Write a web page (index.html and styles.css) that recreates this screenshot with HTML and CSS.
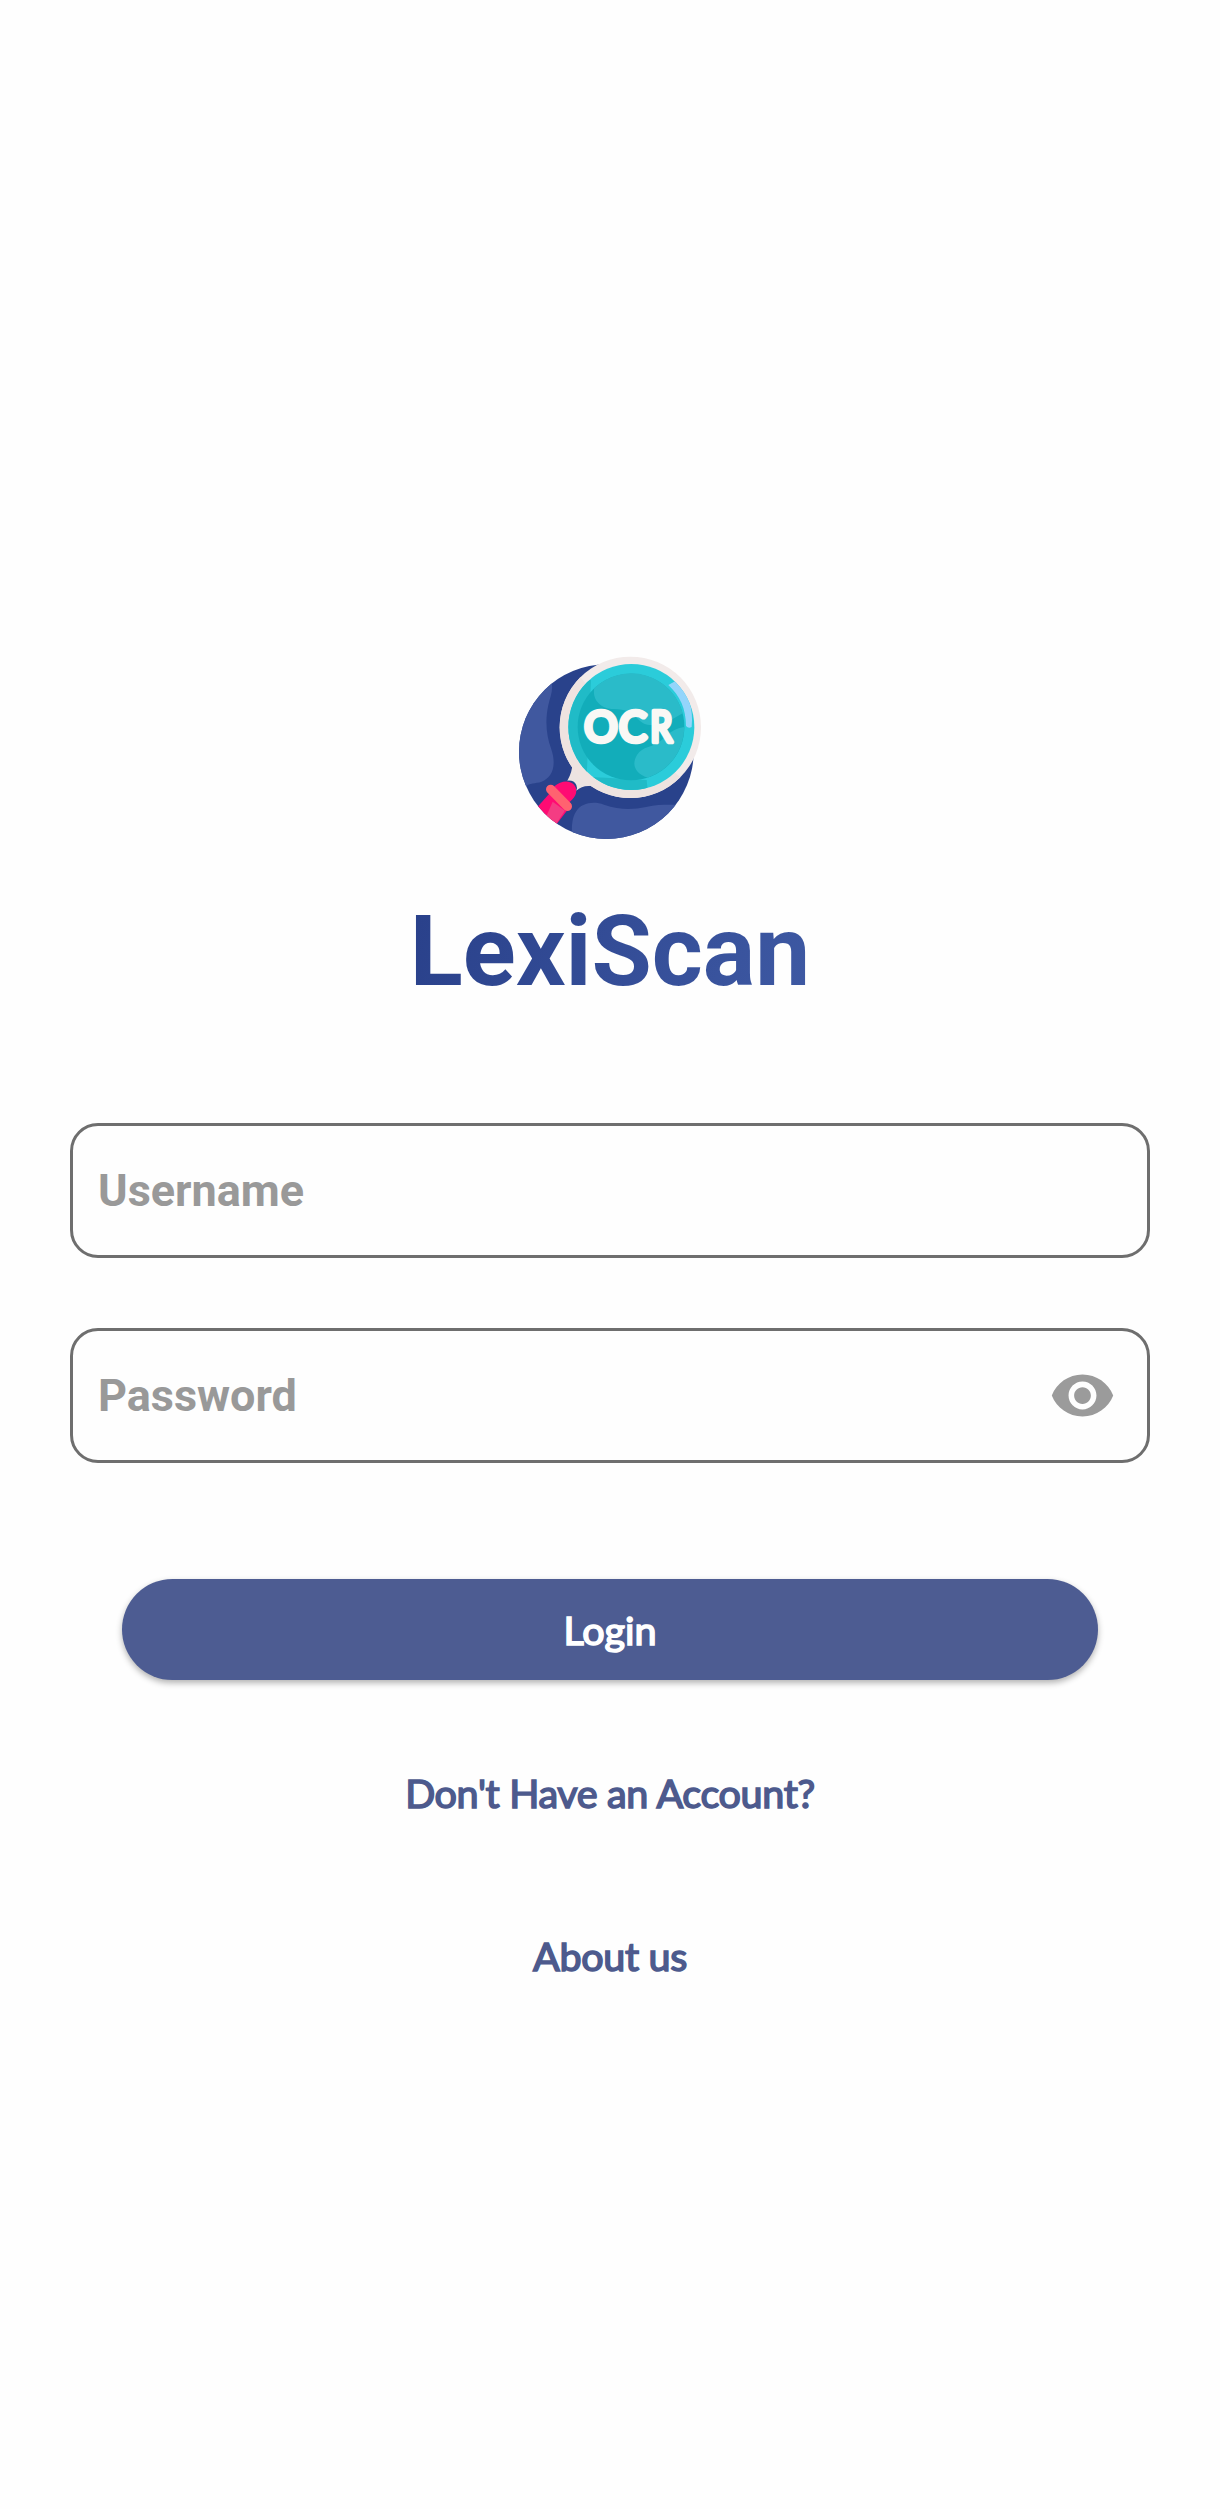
FILE: index.html
```html
<!DOCTYPE html>
<html lang="en">
<head>
<meta charset="utf-8">
<title>LexiScan</title>
<link rel="stylesheet" href="styles.css">
</head>
<body>
<main class="login">
  <svg class="logo" viewBox="0 0 600 600" role="img" aria-label="OCR">
    <defs>
      <clipPath id="disc"><circle cx="289" cy="305" r="262"/></clipPath>
      <clipPath id="lens"><circle cx="364" cy="231" r="189"/></clipPath>
    </defs>
    <g clip-path="url(#disc)">
      <rect width="600" height="600" fill="#29428b"/>
      <path d="M0 120 L118 80 C135 112 122 135 115 165 C104 215 110 260 123 295 C142 350 125 382 95 395 C75 402 60 396 45 412 L0 420Z" fill="#40589f"/>
      <path d="M188 580 C184 540 184 505 198 485 C215 458 250 453 282 464 C330 481 370 479 408 471 C455 460 485 466 520 463 L500 600 H188Z" fill="#40589f"/>
      <path d="M128 420 L60 496 L126 540 L180 470Z" fill="#ff0b73"/>
      <path d="M128 455 L104 510 L126 540 L165 482Z" fill="#f43c83"/>
    </g>
    <path d="M134 408 C150 393 177 389 190 402 C203 415 202 434 186 449 L166 468 L125 428Z" fill="#ff0b73"/>
    <path d="M122 418 L172 469" stroke="#ff6270" stroke-width="28" stroke-linecap="round"/>
    <path d="M187 340 Q187 367 172 392 Q192 390 199 405 Q203 414 199 422 Q215 407 238 408 L285 400Z" fill="#ece3e1"/>
    <circle cx="361" cy="232" r="212" fill="#f2ebea"/>
    <path d="M211 82 A212 212 0 0 0 511 382 L485 360 A181 181 0 0 1 231 105Z" fill="#eee3e0"/>
    <circle cx="364" cy="231" r="189" fill="#2bccda"/>
    <g clip-path="url(#lens)">
      <path d="M170 100 L243 90 L230 380 L410 390 L415 440 H170Z" fill="#20bbc7"/>
      <circle cx="363" cy="231" r="160" fill="#12adba"/>
      <path d="M253 114 C246 145 267 173 305 177 C346 176 367 186 384 207 C411 237 442 225 488 207 L518 190 A160 160 0 0 0 253 114Z" fill="#2abbc9"/>
      <path d="M523 231 C480 238 475 257 445 278 C427 292 399 287 381 315 C364 343 374 369 413 383 A160 160 0 0 0 523 231Z" fill="#2abbc9"/>
      <path d="M475 105 L502 90 A189 189 0 0 1 545 231 Q535 236 528 228 C528 177 510 137 475 105Z" fill="#94d5fb"/>
    </g>
    <g class="logo-text">
      <text x="223" y="276">O</text>
      <text x="327" y="276">C</text>
      <text x="421" y="276" textLength="66" lengthAdjust="spacingAndGlyphs">R</text>
    </g>
  </svg>
  <h1 class="title">LexiScan</h1>
  <form class="form">
    <label class="field"><input class="input" type="text" placeholder="Username"></label>
    <label class="field"><input class="input" type="password" placeholder="Password">
      <svg class="eye" viewBox="0 0 24 24" fill="#9b9b9b"><path d="M12 4.5C7 4.5 2.73 7.61 1 12c1.730 4.390 6 7.500 11 7.500s9.270-3.110 11-7.500c-1.730-4.390-6-7.500-11-7.500zM12 17c-2.760 0-5-2.240-5-5s2.240-5 5-5 5 2.240 5 5-2.240 5-5 5zm0-8c-1.660 0-3 1.340-3 3s1.340 3 3 3 3-1.340 3-3-1.340-3-3-3z"/></svg>
    </label>
    <button class="button" type="button">Login</button>
  </form>
  <a class="link">Don't Have an Account?</a>
  <a class="link link-about">About us</a>
</main>
</body>
</html>
```
FILE: styles.css
```css
* { box-sizing: border-box; }
body { margin: 0; background: #fefefe; }
.login {
  min-height: 2509px;
  padding: 650px 70px 0;
  display: flex;
  flex-direction: column;
  align-items: center;
}
.logo { width: 200px; height: 200px; display: block; }
.logo-text {
  font: 400 125px Lato, sans-serif;
  fill: #f9f8f5;
  stroke: #f9f8f5;
  stroke-width: 14px;
  stroke-linejoin: round;
}
.title {
  margin: 42px 0 0;
  font: bold 98px/120px Roboto, sans-serif;
  color: transparent;
  background: linear-gradient(110deg, #29408a, #3e59a3);
  background-clip: text;
  -webkit-background-clip: text;
}
.form {
  width: 100%;
  margin-top: 111px;
  display: flex;
  flex-direction: column;
  gap: 70px;
}
.field {
  height: 135px;
  display: flex;
  align-items: center;
  padding: 0 31px 0 25px;
  border: 3px solid #6e6e6e;
  border-radius: 28px;
}
.input {
  flex: 1;
  min-width: 0;
  padding: 0;
  border: 0;
  outline: 0;
  background: none;
  font: bold 45px/60px Roboto, sans-serif;
}
.input::placeholder { color: #999; opacity: 1; }
.eye { width: 67px; height: 67px; }
.button {
  height: 101px;
  margin: 46px 52px 0;
  padding: 0;
  border: 0;
  border-radius: 51px;
  background: #4d5c92;
  box-shadow: 0 3px 6px rgba(0, 0, 0, .3);
  color: #fff;
  font: 400 39.5px/50px Lato, sans-serif;
  -webkit-text-stroke: 1.6px #fff;
}
.link {
  margin-top: 88px;
  color: #4d5a8d;
  font: 400 39.5px/50px Lato, sans-serif;
  letter-spacing: -.35px;
  -webkit-text-stroke: 1.6px #4d5a8d;
}
.link-about { margin-top: 113px; }
```
